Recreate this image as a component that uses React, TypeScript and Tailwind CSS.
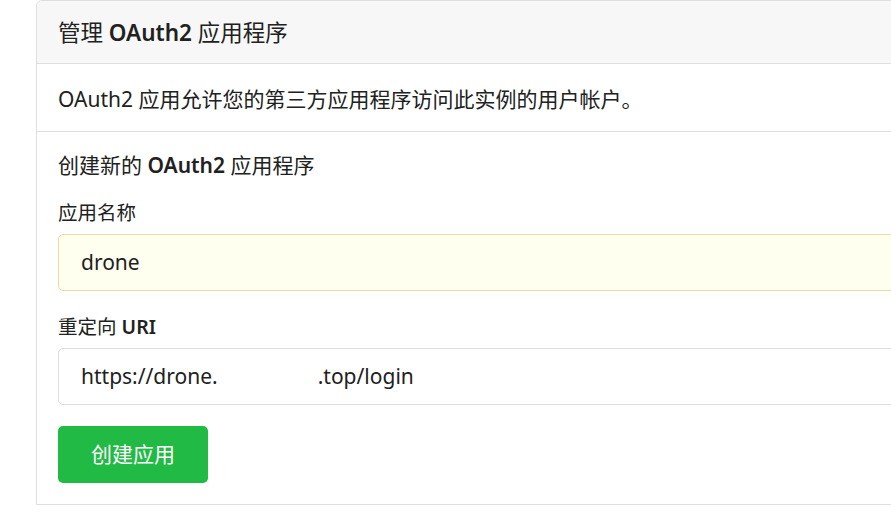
import React from "react";

const font = { fontFamily: '"Noto Sans", "Noto Sans CJK SC", sans-serif' };

export default function App() {
  return (
    <div className="w-[891px] h-[514px] overflow-hidden bg-white text-[#212121]" style={font}>
      <div className="ml-[36px] w-[900px] border border-[#dedede] rounded-t-[6px] bg-white">
        <div className="h-[63px] border-b border-[#dedede] bg-[#f7f7f7] rounded-t-[6px] flex items-center px-[21px] text-[22.5px] leading-[29px]">
          <span>管理 </span>
          <span className="font-semibold">&nbsp;OAuth2&nbsp;</span>
          <span> 应用程序</span>
        </div>
        <div className="h-[68px] border-b border-[#dedede] flex items-center px-[21px] pt-[3px] text-[21px] leading-[22px]">
          OAuth2 应用允许您的第三方应用程序访问此实例的用户帐户。
        </div>
        <div className="px-[21px] pt-[22px] pb-[21px] flex flex-col items-start">
          <div className="text-[21px] leading-[22px] h-[22px]">
            创建新的 <span className="font-semibold">OAuth2</span> 应用程序
          </div>
          <div className="mt-[26px] text-[19.5px] leading-[22px] h-[22px]">应用名称</div>
          <div className="mt-[10px] w-[860px] h-[57px] rounded-[5px] border border-[#e5dfa1] bg-[#fffff0] flex items-center px-[22px] text-[21px]">
            drone
          </div>
          <div className="mt-[25px] text-[19.5px] leading-[22px] h-[22px]">
            重定向 <span className="font-semibold">URI</span>
          </div>
          <div className="mt-[10px] w-[860px] h-[57px] rounded-[5px] border border-[#dedede] bg-white flex items-center px-[22px] text-[21px]">
            <span>https://drone.</span>
            <span className="inline-block w-[100px]" />
            <span>.top/login</span>
          </div>
          <button className="mt-[21px] w-[150px] h-[57px] rounded-[5px] bg-[#21ba45] text-white text-[21px] flex items-center justify-center">
            创建应用
          </button>
        </div>
      </div>
    </div>
  );
}
